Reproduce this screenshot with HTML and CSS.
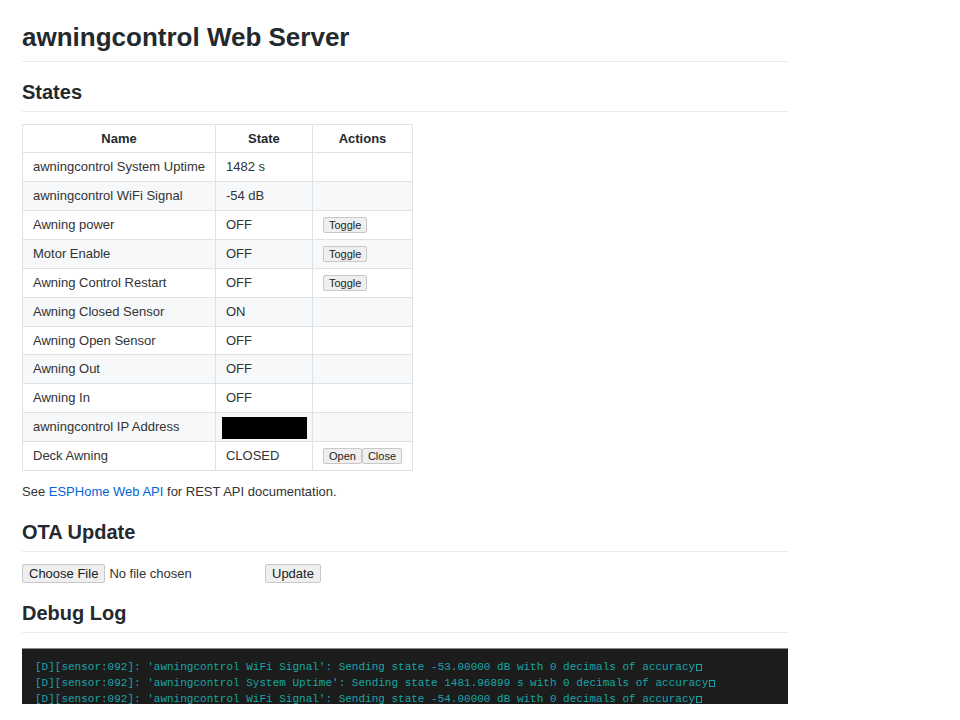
FILE: index.html
```html
<!DOCTYPE html>
<html lang="en">
<head>
<meta charset="utf-8">
<title>awningcontrol Web Server</title>
<link rel="stylesheet" href="styles.css">
</head>
<body>
<main class="page">
  <h1 class="title">awningcontrol Web Server</h1>

  <h2 class="section">States</h2>
  <table class="states">
    <thead>
      <tr><th>Name</th><th>State</th><th>Actions</th></tr>
    </thead>
    <tbody>
      <tr><td>awningcontrol System Uptime</td><td>1482 s</td><td></td></tr>
      <tr><td>awningcontrol WiFi Signal</td><td>-54 dB</td><td></td></tr>
      <tr><td>Awning power</td><td>OFF</td><td><button class="btn">Toggle</button></td></tr>
      <tr><td>Motor Enable</td><td>OFF</td><td><button class="btn">Toggle</button></td></tr>
      <tr><td>Awning Control Restart</td><td>OFF</td><td><button class="btn">Toggle</button></td></tr>
      <tr><td>Awning Closed Sensor</td><td>ON</td><td></td></tr>
      <tr><td>Awning Open Sensor</td><td>OFF</td><td></td></tr>
      <tr><td>Awning Out</td><td>OFF</td><td></td></tr>
      <tr><td>Awning In</td><td>OFF</td><td></td></tr>
      <tr><td>awningcontrol IP Address</td><td><span class="redacted"></span></td><td></td></tr>
      <tr><td>Deck Awning</td><td>CLOSED</td><td><button class="btn">Open</button><button class="btn">Close</button></td></tr>
    </tbody>
  </table>

  <p class="note">See <a class="link" href="#">ESPHome Web API</a> for REST API documentation.</p>

  <h2 class="section">OTA Update</h2>
  <form class="ota">
    <input class="file" type="file" name="update">
    <button class="btn btn-lg" type="button">Update</button>
  </form>

  <h2 class="section">Debug Log</h2>
  <pre class="log"><span class="d">[D][sensor:092]: 'awningcontrol WiFi Signal': Sending state -53.00000 dB with 0 decimals of accuracy<span class="esc"></span></span>
<span class="d">[D][sensor:092]: 'awningcontrol System Uptime': Sending state 1481.96899 s with 0 decimals of accuracy<span class="esc"></span></span>
<span class="d">[D][sensor:092]: 'awningcontrol WiFi Signal': Sending state -54.00000 dB with 0 decimals of accuracy<span class="esc"></span></span></pre>
</main>
</body>
</html>
```

FILE: styles.css
```css
html, body {
  margin: 0;
  padding: 0;
  background: #ffffff;
}

body {
  font-family: "Liberation Sans", Arial, sans-serif;
  font-size: 13px;
  line-height: 1.5;
  color: #333333;
}

.page {
  width: 766px;
  padding: 21px 0 0 22px;
}

.title {
  margin: 0;
  font-size: 26px;
  line-height: 1.25;
  font-weight: 700;
  color: #24292e;
  padding-bottom: 7px;
  border-bottom: 1px solid #eaecef;
}

.section {
  margin: 18px 0 12px;
  font-size: 20px;
  line-height: 25px;
  font-weight: 700;
  color: #24292e;
  padding-bottom: 6px;
  border-bottom: 1px solid #eaecef;
}

.states {
  border-collapse: collapse;
  border-spacing: 0;
}

.states th,
.states td {
  padding: 6px 10px;
  border: 1px solid #dfe2e5;
  line-height: 15.75px;
  height: 15.75px;
  text-align: left;
  white-space: nowrap;
}

.states th {
  font-weight: 700;
  text-align: center;
  color: #24292e;
}

.states tbody tr:nth-child(even) {
  background: #f6f8fa;
}

.redacted {
  display: inline-block;
  vertical-align: top;
  width: 85px;
  height: 22px;
  margin: -2px -5px -5px -4px;
  background: #000;
}

.btn {
  font-family: "Liberation Sans", Arial, sans-serif;
  font-size: 11px;
  line-height: 12px;
  padding: 1px 5px;
  margin: 0;
  color: #222;
  background: #efefef;
  border: 1px solid #c8c8c8;
  border-radius: 2px;
  vertical-align: top;
}

.btn-lg {
  font-size: 13px;
  line-height: 15px;
  padding: 1px 6px;
  vertical-align: middle;
}

.note {
  margin: 11px 0 0;
  line-height: 20px;
}

.link {
  color: #0366d6;
  text-decoration: none;
}

.ota {
  margin: 12px 0 0;
  display: flex;
  align-items: center;
  gap: 4px;
  font-size: 13px;
}

.file {
  width: 239px;
  font-family: "Liberation Sans", Arial, sans-serif;
  font-size: 13px;
  color: #333333;
}

.file::file-selector-button {
  font-family: "Liberation Sans", Arial, sans-serif;
  font-size: 13px;
  line-height: 15px;
  padding: 1px 6px;
  margin: 0 4px 0 0;
  color: #222;
  background: #efefef;
  border: 1px solid #c8c8c8;
  border-radius: 2px;
}

.log {
  box-sizing: border-box;
  height: 56px;
  margin: 15px 0 0;
  padding: 10px 13px 0;
  background: #1c1c1c;
  border-top: 1px solid #8a8a8a;
  font-family: "Liberation Mono", "DejaVu Sans Mono", monospace;
  font-size: 11px;
  line-height: 16px;
  overflow: hidden;
}

.d {
  color: #17a6a6;
}

.esc {
  display: inline-block;
  width: 4px;
  height: 5px;
  margin-left: 1px;
  border: 1px solid #17a6a6;
  vertical-align: -1px;
}
```
